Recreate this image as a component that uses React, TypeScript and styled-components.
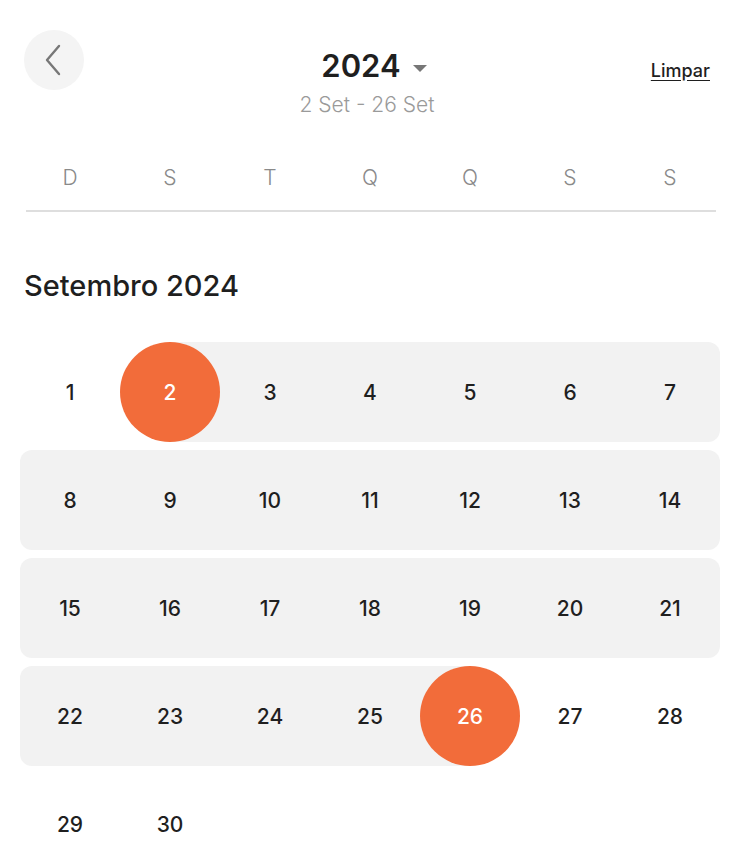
import React from "react";
import styled, { createGlobalStyle, css } from "styled-components";

const GlobalStyle = createGlobalStyle`
  body {
    margin: 0;
    background: #ffffff;
    font-family: Inter, "Noto Sans", sans-serif;
    color: #1f1f1f;
  }
`;

const Page = styled.div`
  width: 740px;
  box-sizing: border-box;
  padding: 30px 20px 0;
`;

const Header = styled.div`
  display: grid;
  grid-template-columns: 1fr auto 1fr;
  align-items: start;
  padding: 0 10px 0 4px;
`;

const BackButton = styled.button`
  width: 60px;
  height: 60px;
  border-radius: 50%;
  border: none;
  background: #f4f4f4;
  display: flex;
  align-items: center;
  justify-content: center;
  padding: 0;
  cursor: pointer;
  justify-self: start;
`;

const TitleBlock = styled.div`
  display: flex;
  flex-direction: column;
  align-items: center;
  padding-top: 16px;
`;

const YearRow = styled.div`
  display: flex;
  align-items: center;
  gap: 12px;
  padding-left: 14px;
`;

const Year = styled.span`
  font-size: 31px;
  font-weight: 600;
  line-height: 40px;
  color: #1f1f1f;
`;

const Caret = styled.span`
  width: 0;
  height: 0;
  border-left: 7px solid transparent;
  border-right: 7px solid transparent;
  border-top: 7px solid #777777;
  margin-top: 4px;
`;

const RangeText = styled.span`
  font-size: 21px;
  font-weight: 300;
  line-height: 26px;
  color: #9a9a9a;
  margin-top: 6px;
`;

const ClearLink = styled.a`
  justify-self: end;
  margin-top: 30px;
  font-size: 18px;
  font-weight: 500;
  color: #1f1f1f;
  text-decoration: underline;
  text-underline-offset: 3px;
  cursor: pointer;
`;

const WeekdayRow = styled.div`
  display: grid;
  grid-template-columns: repeat(7, 100px);
  margin-top: 47px;
`;

const Weekday = styled.span`
  text-align: center;
  font-size: 21px;
  font-weight: 300;
  line-height: 26px;
  color: #8a8a8a;
`;

const Divider = styled.div`
  height: 2px;
  background: #dedede;
  margin: 19px 4px 0 6px;
`;

const MonthTitle = styled.h2`
  margin: 56px 0 0 4px;
  font-size: 29px;
  font-weight: 500;
  line-height: 36px;
  color: #1f1f1f;
`;

const Weeks = styled.div`
  display: flex;
  flex-direction: column;
  gap: 8px;
  margin-top: 38px;
`;

const WeekRow = styled.div`
  display: grid;
  grid-template-columns: repeat(7, 100px);
  height: 100px;
`;

type Band = "none" | "full" | "first" | "last" | "start" | "end";

const bandStyles: Record<Band, ReturnType<typeof css>> = {
  none: css``,
  full: css`
    background: #f2f2f2;
  `,
  first: css`
    background: #f2f2f2;
    border-radius: 12px 0 0 12px;
  `,
  last: css`
    background: #f2f2f2;
    border-radius: 0 12px 12px 0;
  `,
  start: css`
    background: linear-gradient(to right, transparent 50%, #f2f2f2 50%);
  `,
  end: css`
    background: linear-gradient(to right, #f2f2f2 50%, transparent 50%);
  `,
};

const DayCell = styled.div<{ $band: Band }>`
  display: flex;
  align-items: center;
  justify-content: center;
  ${(p) => bandStyles[p.$band]}
`;

const DayNumber = styled.span<{ $selected?: boolean }>`
  width: 100px;
  height: 100px;
  border-radius: 50%;
  display: flex;
  align-items: center;
  justify-content: center;
  font-size: 21px;
  font-weight: 500;
  color: #1f1f1f;
  ${(p) =>
    p.$selected &&
    css`
      background: #f26c3a;
      color: #ffffff;
    `}
`;

const weekdays = ["D", "S", "T", "Q", "Q", "S", "S"];

const START = 2;
const END = 26;

function bandFor(day: number, col: number): Band {
  if (day < START || day > END) return "none";
  if (day === START) return "start";
  if (day === END) return "end";
  if (col === 0) return "first";
  if (col === 6) return "last";
  return "full";
}

const weeks: (number | null)[][] = [
  [1, 2, 3, 4, 5, 6, 7],
  [8, 9, 10, 11, 12, 13, 14],
  [15, 16, 17, 18, 19, 20, 21],
  [22, 23, 24, 25, 26, 27, 28],
  [29, 30, null, null, null, null, null],
];

export default function App() {
  return (
    <>
      <GlobalStyle />
      <Page>
        <Header>
          <BackButton aria-label="Voltar">
            <svg width="24" height="34" viewBox="0 0 24 34" fill="none">
              <path d="M17 3L5 17L17 31" stroke="#777777" strokeWidth="2.4" strokeLinecap="round" strokeLinejoin="round" />
            </svg>
          </BackButton>
          <TitleBlock>
            <YearRow>
              <Year>2024</Year>
              <Caret />
            </YearRow>
            <RangeText>2 Set - 26 Set</RangeText>
          </TitleBlock>
          <ClearLink>Limpar</ClearLink>
        </Header>

        <WeekdayRow>
          {weekdays.map((w, i) => (
            <Weekday key={i}>{w}</Weekday>
          ))}
        </WeekdayRow>
        <Divider />

        <MonthTitle>Setembro 2024</MonthTitle>

        <Weeks>
          {weeks.map((week, wi) => (
            <WeekRow key={wi}>
              {week.map((day, ci) =>
                day === null ? (
                  <DayCell key={ci} $band="none" />
                ) : (
                  <DayCell key={ci} $band={bandFor(day, ci)}>
                    <DayNumber $selected={day === START || day === END}>{day}</DayNumber>
                  </DayCell>
                )
              )}
            </WeekRow>
          ))}
        </Weeks>
      </Page>
    </>
  );
}
